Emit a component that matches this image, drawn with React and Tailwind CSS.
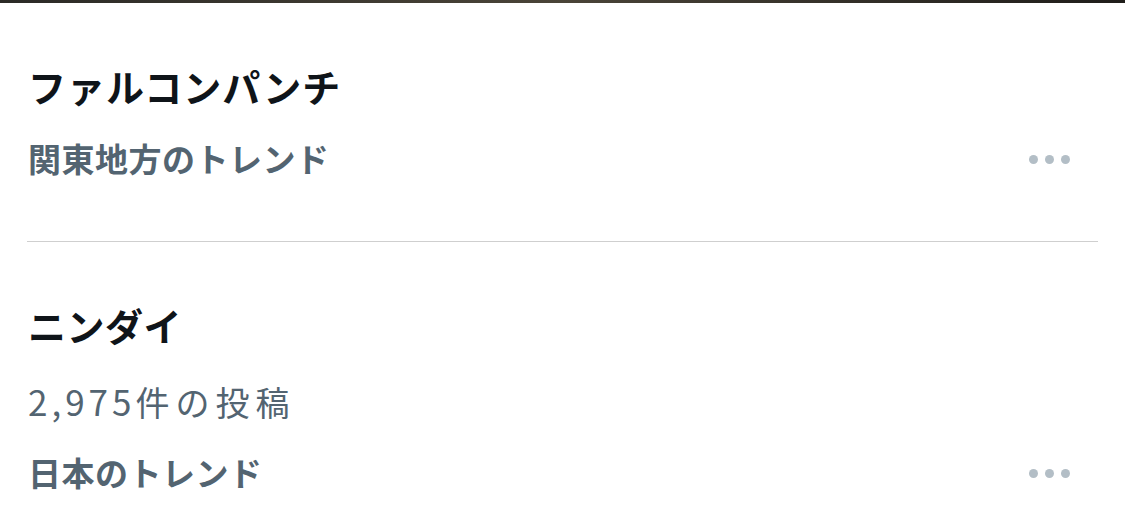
import React from 'react';

const Dots = () => (
  <div className="flex items-center gap-[7px] mr-[55px] mt-[3px]">
    <span className="block w-[9px] h-[9px] rounded-full bg-[#b3bec6]" />
    <span className="block w-[9px] h-[9px] rounded-full bg-[#b3bec6]" />
    <span className="block w-[9px] h-[9px] rounded-full bg-[#b3bec6]" />
  </div>
);

const App = () => {
  return (
    <div
      className="w-[1125px] h-[527px] bg-white overflow-hidden"
      style={{ fontFamily: '"Noto Sans CJK JP", "Noto Sans", sans-serif' }}
    >
      <div className="h-[3px] bg-gradient-to-r from-[#2b2a26] via-[#4a4438] to-[#1f1d1a]" />

      {/* trend 1 */}
      <div className="pl-[28px] pt-[59px]">
        <div className="h-[48px] leading-[48px] text-[38px] font-bold tracking-[1px] text-[#0f1419]">
          ファルコンパンチ
        </div>
        <div className="mt-[26px] h-[44px] flex items-center justify-between">
          <span className="leading-[44px] text-[33px] font-bold tracking-[0.5px] text-[#536471]">
            関東地方のトレンド
          </span>
          <Dots />
        </div>
      </div>

      <div className="mt-[61px] mx-[27px] h-px bg-[#cfcfcf]" />

      {/* trend 2 */}
      <div className="pl-[28px] pt-[59px]">
        <div className="h-[48px] leading-[48px] text-[38px] font-bold tracking-[0.5px] text-[#0f1419]">
          ニンダイ
        </div>
        <div className="mt-[30px] h-[44px] leading-[44px] text-[#536471]">
          <span className="text-[35px] tracking-[4px]">2,975</span>
          <span className="text-[34px] tracking-[6px]">件の投稿</span>
        </div>
        <div className="mt-[27px] h-[44px] flex items-center justify-between">
          <span className="leading-[44px] text-[33px] font-bold tracking-[0.5px] text-[#536471]">
            日本のトレンド
          </span>
          <Dots />
        </div>
      </div>
    </div>
  );
};

export default App;
